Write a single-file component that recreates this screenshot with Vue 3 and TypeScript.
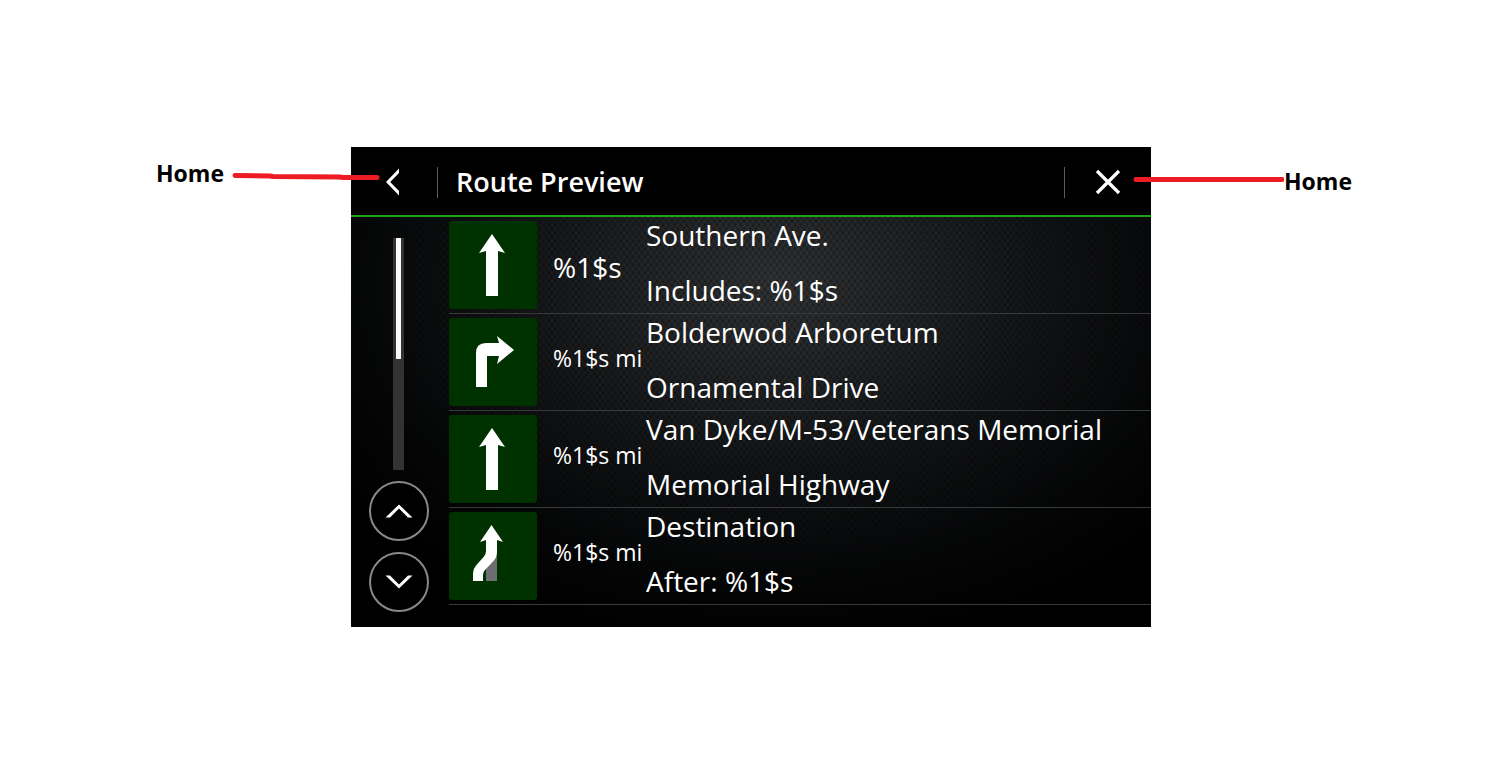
<script setup lang="ts">
import { computed, ref } from 'vue'

type Maneuver = 'straight' | 'right' | 'keep-left'

interface Step {
  maneuver: Maneuver
  distance: string
  large?: boolean
  street: string
  detail: string
}

const steps: Step[] = [
  { maneuver: 'straight', distance: '%1$s', large: true, street: 'Southern Ave.', detail: 'Includes: %1$s' },
  { maneuver: 'right', distance: '%1$s mi', street: 'Bolderwod Arboretum', detail: 'Ornamental Drive' },
  { maneuver: 'straight', distance: '%1$s mi', street: 'Van Dyke/M-53/Veterans Memorial', detail: 'Memorial Highway' },
  { maneuver: 'keep-left', distance: '%1$s mi', street: 'Destination', detail: 'After: %1$s' },
]

const position = ref(0)
const thumbTop = computed(() => `${position.value}%`)

function scrollBy(delta: number) {
  position.value = Math.min(48, Math.max(0, position.value + delta))
}
</script>

<template>
  <main class="page">
    <section class="device">
      <header class="bar">
        <button class="nav back" type="button" aria-label="Back">
          <svg width="18" height="28" viewBox="0 0 18 28"><path d="M14 .5V5L5.200 14 14 23V27.500L1 14Z" fill="#fff" /></svg>
        </button>
        <h1 class="title">Route Preview</h1>
        <button class="nav close" type="button" aria-label="Close">
          <svg width="26" height="26" viewBox="0 0 26 26"><path d="M2 2l22 22M24 2L2 24" stroke="#fff" stroke-width="3.200" /></svg>
        </button>
      </header>

      <div class="body">
        <nav class="scroller" aria-label="Scroll list">
          <div class="track"><div class="thumb" :style="{ top: thumbTop }"></div></div>
          <button class="round" type="button" aria-label="Scroll up" @click="scrollBy(-12)">
            <svg width="28" height="14" viewBox="0 0 28 14"><path d="M.5 13.500L14 .5l13.500 13h-4.500L14 4.500l-9 9Z" fill="#fff" /></svg>
          </button>
          <button class="round" type="button" aria-label="Scroll down" @click="scrollBy(12)">
            <svg width="28" height="14" viewBox="0 0 28 14"><path d="M.5 .5L14 13.500 27.500 .5H23L14 9.500 5 .5Z" fill="#fff" /></svg>
          </button>
        </nav>

        <ol class="steps">
          <li v-for="step in steps" :key="step.street" class="step">
            <span class="tile">
              <svg width="88" height="88" viewBox="0 0 88 88" aria-hidden="true">
                <path v-if="step.maneuver === 'straight'" d="M43 13L56 32L49 30V75H37V30L30 32Z" fill="#fff" />
                <path v-else-if="step.maneuver === 'right'" d="M27 69V35Q27 25 37 25H50L48 18L65 32L48 46L50 38H38V69Z" fill="#fff" />
                <template v-else>
                  <path d="M37 40H48V69H37Z" fill="#6d6e71" />
                  <path d="M42.500 13L54 30L48 28V40Q48 45 44.500 49L36 58Q34 60 34 63V69H24V61Q24 57 27 53.500L35 44.500Q37 42 37 39V28L31 30Z" fill="#fff" />
                </template>
              </svg>
            </span>
            <span class="distance" :class="{ large: step.large }">{{ step.distance }}</span>
            <span class="text">
              <span>{{ step.street }}</span>
              <span>{{ step.detail }}</span>
            </span>
          </li>
        </ol>
      </div>

      <div class="callout left">
        <span>Home</span>
        <svg width="148" height="10" viewBox="0 0 148 10"><path d="M3 4.500L38 5L41 5.500L108 6L111 6.500L145 6.500" /></svg>
      </div>
      <div class="callout right">
        <svg width="152" height="10" viewBox="0 0 152 10"><path d="M4 4.500H150" /></svg>
        <span>Home</span>
      </div>
    </section>
  </main>
</template>

<style>
body {
  margin: 0;
  background: #fff;
}
</style>

<style scoped>
.page {
  display: grid;
  grid-template-columns: 351fr 800fr 340fr;
  padding: 147px 0;
  font-family: "Open Sans", "Noto Sans", sans-serif;
}

.device {
  grid-column: 2;
  position: relative;
  background: #000;
  color: #fff;
}

.bar {
  display: flex;
  align-items: center;
  height: 66px;
  padding-top: 2px;
  border-bottom: 2px solid #21a116;
}

button {
  display: flex;
  align-items: center;
  justify-content: center;
  padding: 0;
  border: 0;
  background: none;
  cursor: pointer;
}

.nav {
  width: 86px;
  height: 31px;
}

.back {
  border-right: 1px solid #595969;
  box-sizing: content-box;
}

.close {
  border-left: 1px solid #595969;
  box-sizing: content-box;
}

.title {
  flex: 1;
  margin: 0;
  padding-left: 18px;
  font-size: 27px;
  font-weight: 600;
  line-height: 36px;
}

.body {
  display: flex;
  gap: 3px;
  background:
    radial-gradient(ellipse 3px 4px at center, rgba(0, 0, 0, 0.3) 30%, transparent 80%) 0 0 / 6px 8px,
    radial-gradient(ellipse 3px 4px at center, rgba(0, 0, 0, 0.3) 30%, transparent 80%) 3px 4px / 6px 8px,
    radial-gradient(ellipse 66% 90% at 53% 16%, #323436 0%, #232527 25%, #131517 50%, #060708 78%, #000 100%);
}

.scroller {
  display: flex;
  flex-direction: column;
  align-items: center;
  gap: 11px;
  width: 95px;
  padding: 21px 0 15px;
  box-sizing: border-box;
}

.track {
  position: relative;
  flex: 1;
  width: 11px;
  background: #333;
}

.thumb {
  position: absolute;
  left: 3px;
  width: 5px;
  height: 52%;
  background: #fafafa;
}

.round {
  width: 60px;
  height: 60px;
  border: 2px solid #898989;
  border-radius: 50%;
  background: #000;
}

.steps {
  flex: 1;
  min-width: 0;
  margin: 0;
  padding: 0 0 22px;
  list-style: none;
}

.step {
  display: flex;
  align-items: center;
  height: 96px;
  border-bottom: 1px solid #38393b;
}

.tile {
  width: 88px;
  height: 88px;
  border-radius: 3px;
  background: #003200;
  overflow: hidden;
}

.distance {
  width: 93px;
  margin-left: 16px;
  padding-bottom: 8px;
  font-size: 23px;
  line-height: 32px;
  white-space: nowrap;
}

.distance.large {
  padding: 4px 0 0;
  font-size: 28px;
}

.text {
  display: flex;
  flex-direction: column;
  align-self: flex-start;
  gap: 19px;
  font-size: 28px;
  line-height: 36px;
  white-space: nowrap;
}

.callout {
  position: absolute;
  display: flex;
  align-items: flex-start;
  color: #000;
  font-size: 23px;
  font-weight: 700;
  line-height: 32px;
  pointer-events: none;
}

.callout path {
  fill: none;
  stroke: #ed1c24;
  stroke-width: 5;
  stroke-linecap: round;
}

.left {
  top: 10px;
  right: calc(100% - 29px);
  gap: 8px;
}

.right {
  top: 18px;
  left: calc(100% - 19px);
}

.left svg {
  margin-top: 14px;
}

.right svg {
  margin-top: 10px;
}
</style>
